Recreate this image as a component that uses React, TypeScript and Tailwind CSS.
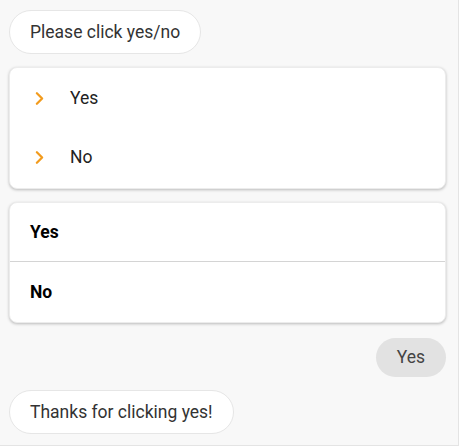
import { ChevronRight } from 'lucide-react'

const font = { fontFamily: 'Roboto, "Noto Sans", sans-serif' }

function Bubble({ children }: { children: React.ReactNode }) {
  return (
    <div className="self-start rounded-full border border-[#e6e6e6] bg-white px-[20px] h-[44px] flex items-center text-[17.5px] text-[#333]">
      {children}
    </div>
  )
}

export default function App() {
  return (
    <div className="w-[461px] h-[448px] bg-white" style={font}>
      <div className="w-[459px] h-[446px] bg-[#f8f8f8] border-r border-b border-[#e4e4e4] flex flex-col pl-[9px] pr-[12px] pt-[10px]">
        <Bubble>Please click yes/no</Bubble>

        {/* Quick replies */}
        <div className="mt-[13px] bg-white rounded-[8px] border border-[#ececec] shadow-[0_1px_3px_rgba(0,0,0,0.25)] flex flex-col py-[1px]">
          {['Yes', 'No'].map(label => (
            <div key={label} className="h-[59px] flex items-center pl-[21px]">
              <ChevronRight size={21} strokeWidth={2.6} className="text-[#f29b1d] -ml-[2px]" />
              <span className="ml-[20px] text-[17.5px] text-[#222]">{label}</span>
            </div>
          ))}
        </div>

        {/* Buttons list */}
        <div className="mt-[13px] bg-white rounded-[8px] border border-[#ececec] shadow-[0_1px_3px_rgba(0,0,0,0.25)] flex flex-col">
          <div className="h-[59px] flex items-center pl-[20px] text-[17.5px] font-bold text-black border-b border-[#d4d4d4]">Yes</div>
          <div className="h-[60px] flex items-center pl-[20px] text-[17.5px] font-bold text-black">No</div>
        </div>

        <div className="mt-[15px] self-end rounded-full bg-[#e2e2e2] h-[39px] px-[21px] flex items-center text-[17.5px] text-[#444]">
          Yes
        </div>

        <div className="mt-[13px] flex flex-col">
          <Bubble>Thanks for clicking yes!</Bubble>
        </div>
      </div>
    </div>
  )
}
